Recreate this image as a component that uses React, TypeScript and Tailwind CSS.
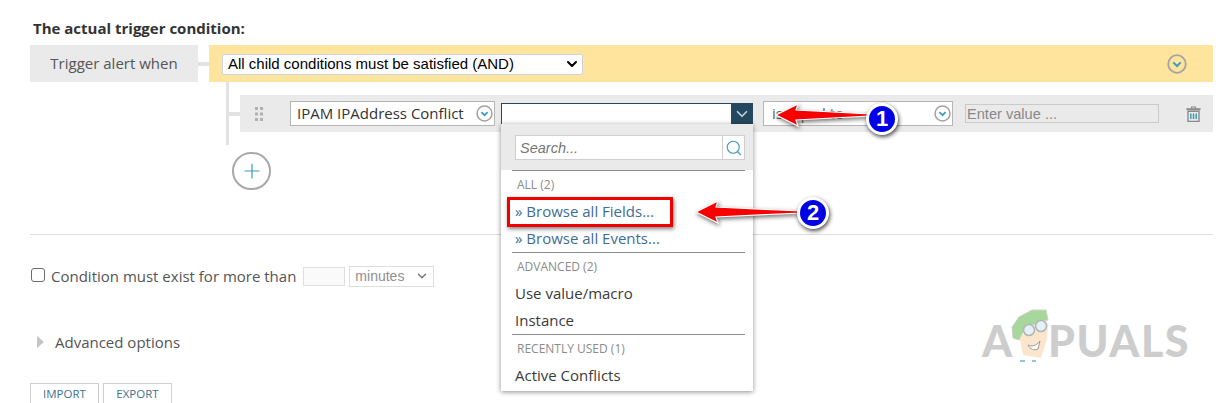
import { ChevronDown, Plus, Search } from 'lucide-react'

const openSans = "font-['Open_Sans',sans-serif]"
const arial = "font-['Liberation_Sans',Arial,sans-serif]"

function CircleChevron({ large }: { large?: boolean }) {
  const size = large ? 20 : 17
  return (
    <svg width={size} height={size} viewBox="0 0 20 20" className="shrink-0">
      <circle cx="10" cy="10" r="8.8" fill="none" stroke="#a3a3a3" strokeWidth="1.8" />
      <path d="M6.3 8.4 10 12l3.7-3.6" fill="none" stroke="#3a9dbd" strokeWidth="2" />
    </svg>
  )
}

function TrashIcon() {
  return (
    <svg width="15" height="16" viewBox="0 0 15 16" className="shrink-0">
      <path d="M5.5 2V1h4v1" fill="none" stroke="#8a8a8a" strokeWidth="1.2" />
      <rect x="0.5" y="2.2" width="14" height="2" fill="#8a8a8a" />
      <path d="M2 5.2h11V15.4H2z" fill="none" stroke="#8a8a8a" strokeWidth="1.4" />
      <path d="M4.8 7.5v5.5M7.5 7.5v5.5M10.2 7.5v5.5" stroke="#3a9dbd" strokeWidth="1.5" />
    </svg>
  )
}

function DragHandle() {
  return (
    <svg width="8" height="14" viewBox="0 0 8 14" className="shrink-0">
      {[0, 5.5, 11].map((y) => (
        <g key={y} fill="#b0b0b0">
          <rect x="0" y={y} width="3" height="3" />
          <rect x="5" y={y} width="3" height="3" />
        </g>
      ))}
    </svg>
  )
}

function Arrow({ width }: { width: number }) {
  return (
    <svg width={width} height="32" viewBox={`0 0 ${width} 32`} className="block overflow-visible">
      <path
        d={`M1 16 23 5l-2 6L${width} 15v2L21 21l2 6z`}
        fill="#f80000"
        stroke="#ffffff"
        strokeWidth="1.2"
        style={{ filter: 'drop-shadow(1px 2px 2px rgba(0,0,0,.55))' }}
      />
    </svg>
  )
}

function Badge({ n }: { n: string }) {
  return (
    <div
      className={`flex h-[32px] w-[32px] items-center justify-center rounded-full border-[3px] border-white bg-[#0000e6] text-[22px] font-bold leading-none text-white shadow-[1px_2px_4px_rgba(0,0,0,.7)] ${arial}`}
    >
      {n}
    </div>
  )
}

function MenuHeading({ children }: { children: string }) {
  return <div className="flex h-[27px] items-center pl-[16px] text-[12px] text-[#8b8b8b]">{children}</div>
}

function MenuItem({ children, link }: { children: string; link?: boolean }) {
  return (
    <div className={`flex h-[27px] items-center pl-[14px] text-[15px] ${link ? 'text-[#3e6d94]' : 'text-[#3a3a3a]'}`}>
      {children}
    </div>
  )
}

function FieldMenu() {
  return (
    <div className={`absolute left-[501px] top-[124px] h-[267px] w-[252px] bg-white shadow-[0_1px_5px_rgba(0,0,0,.45)] ${openSans}`}>
      <div className="h-[46px] bg-[#eaeaea] pl-[14px] pt-[11px]">
        <div className="flex h-[25px] w-[230px] border border-[#cfcfcf] bg-white">
          <div className={`flex-1 pl-[4px] text-[14.5px] italic leading-[25px] text-[#777] ${arial}`}>Search...</div>
          <div className="flex w-[22px] items-center justify-center border-l border-[#cfcfcf]">
            <Search size={18} strokeWidth={1.5} className="text-[#4a9dbb]" />
          </div>
        </div>
      </div>
      <div className="ml-[11px] mr-[8px] border-t border-[#8c8c8c]" />
      <MenuHeading>ALL (2)</MenuHeading>
      <MenuItem link>» Browse all Fields...</MenuItem>
      <MenuItem link>» Browse all Events...</MenuItem>
      <div className="ml-[11px] mr-[8px] border-t border-[#8c8c8c]" />
      <MenuHeading>ADVANCED (2)</MenuHeading>
      <MenuItem>Use value/macro</MenuItem>
      <MenuItem>Instance</MenuItem>
      <div className="ml-[11px] mr-[8px] border-t border-[#8c8c8c]" />
      <MenuHeading>RECENTLY USED (1)</MenuHeading>
      <MenuItem>Active Conflicts</MenuItem>
    </div>
  )
}

function Watermark() {
  return (
    <div className="absolute left-[982px] top-[306px] flex h-[56px] items-start">
      <span className="mt-[10px] w-[26px] text-[43px] font-black leading-[50px] text-[#cdcdcd] font-['Lato',sans-serif]">A</span>
      <svg width="42" height="56" viewBox="0 0 42 56" className="shrink-0">
        <path d="M11 30 15 49l18 3 6-19 1-15z" fill="#fbe6cd" />
        <path d="M4 21 11 11 24 4h14l2 10-8 2-10 4-8 8-3 6-6-2z" fill="#a8d79c" stroke="#cfcfcf" />
        <circle cx="21" cy="24" r="5.5" fill="#e3f1f8" stroke="#b5b5b5" strokeWidth="1.6" />
        <circle cx="33" cy="20" r="5.5" fill="#e3f1f8" stroke="#b5b5b5" strokeWidth="1.6" />
        <path d="M20 39c4 2 8 1 12-4l-2 8c-4 2-8 0-10-4z" fill="#ffffff" stroke="#9a9a9a" />
        <path d="M12 55h5M24 55h4" stroke="#8fc4da" strokeWidth="2" />
      </svg>
      <span className="mt-[10px] -ml-[2px] text-[43px] font-black leading-[50px] tracking-[1.5px] text-[#cdcdcd] font-['Lato',sans-serif]">
        PUALS
      </span>
    </div>
  )
}

export default function App() {
  return (
    <div className={`relative h-[403px] w-[1230px] overflow-hidden bg-white pl-[30px] pr-[17px] text-[#444] ${openSans}`}>
      <h2 className="h-[45px] pl-[3px] pt-[18px] text-[15px] font-bold leading-[20px] text-[#333]">
        The actual trigger condition:
      </h2>

      {/* Root condition */}
      <div className="flex h-[37px] items-center">
        <div className="flex h-full w-[168px] items-center justify-center text-[15px] text-[#555] bg-[#eaeaea]">
          Trigger alert when
        </div>
        <div className="h-[4px] w-[11px] bg-[#e2e2e2]" />
        <div className="flex h-full flex-1 items-center justify-between bg-[#ffe49e] pl-[13px] pr-[26px]">
          <div className={`mt-[1px] flex h-[21px] w-[361px] items-center justify-between rounded-[2px] border border-[#cfd3dc] bg-white pl-[5px] pr-[2px] text-[15px] text-black ${arial}`}>
            All child conditions must be satisfied (AND)
            <ChevronDown size={16} strokeWidth={3} className="text-black" />
          </div>
          <CircleChevron large />
        </div>
      </div>

      {/* Child conditions with tree line */}
      <div className="ml-[196px] h-[63px] w-[3px] bg-[#e2e2e2]" />
      <div className="-mt-[50px] ml-[199px] flex h-[37px] items-center">
        <div className="h-[4px] w-[11px] bg-[#e2e2e2]" />
        <div className="flex h-full flex-1 items-center bg-[#eaeaea] pl-[15px]">
          <DragHandle />
          <div className="ml-[27px] flex h-[25px] w-[205px] items-center justify-between border border-[#b5b5b5] bg-white pl-[6px] pr-[1px] text-[15px] text-[#333]">
            IPAM IPAddress Conflict
            <CircleChevron />
          </div>
          <div className="ml-[6px] flex h-[21px] w-[252px] border border-[#24485f] border-b-0 border-r-0 bg-white">
            <div className="flex-1" />
            <div className="flex w-[22px] items-center justify-center bg-[#24495f]">
              <ChevronDown size={18} strokeWidth={2.2} className="text-[#c5d3dc]" />
            </div>
          </div>
          <div className="ml-[10px] flex h-[25px] w-[190px] items-center justify-between border border-[#b5b5b5] bg-white pl-[8px] pr-[1px] text-[15px] text-[#666]">
            is equal to
            <CircleChevron />
          </div>
          <div className={`ml-[12px] flex h-[19px] w-[194px] items-center border border-[#cacaca] pl-[1px] pt-[2px] text-[14.6px] text-[#888] ${arial}`}>
            Enter value ...
          </div>
          <div className="ml-[27px]">
            <TrashIcon />
          </div>
        </div>
      </div>

      <div className="ml-[202px] mt-[20px] flex h-[38px] w-[39px] items-center justify-center rounded-full border-2 border-[#a8a8a8] bg-white">
        <Plus size={24} strokeWidth={1.2} className="text-[#3a9dbd]" />
      </div>

      <div className="mt-[44px] border-t border-[#dcdcdc]" />

      <div className="mt-[30px] flex h-[22px] items-center text-[15px] text-[#555]">
        <div className="ml-[1px] -mt-[2px] h-[14px] w-[14px] rounded-[3px] border border-[#6b6b6b] bg-white" />
        <span className="ml-[6px]">Condition must exist for more than</span>
        <div className="ml-[7px] h-[19px] w-[42px] border border-[#dedede] bg-[#fafafa]" />
        <div className={`ml-[4px] flex h-[21px] w-[85px] items-center justify-between border border-[#dedede] pl-[5px] pr-[4px] text-[14px] text-[#8f8f8f] ${arial}`}>
          minutes
          <ChevronDown size={14} strokeWidth={2.5} className="text-[#777]" />
        </div>
      </div>

      <div className="mt-[44px] flex h-[22px] items-center text-[15px] text-[#555]">
        <div className="ml-[7px] h-0 w-0 border-y-[6px] border-l-[7px] border-y-transparent border-l-[#c4c4c4]" />
        <span className="ml-[11px]">Advanced options</span>
      </div>

      <div className="mt-[30px] flex gap-[4px]">
        <div className="flex h-[24px] w-[69px] justify-center border border-[#cfcfcf] pt-[1px] text-[11.5px] text-[#3f7290]">IMPORT</div>
        <div className="flex h-[24px] w-[69px] justify-center border border-[#cfcfcf] pt-[1px] text-[11.5px] text-[#3f7290]">EXPORT</div>
      </div>

      <FieldMenu />

      {/* Screenshot annotations */}
      <div className="absolute left-[775px] top-[99px]">
        <Arrow width={95} />
      </div>
      <div className="absolute left-[866px] top-[103px]">
        <Badge n="1" />
      </div>
      <div className="absolute left-[507px] top-[197px] h-[30px] w-[166px] border-[3px] border-[#f00000] shadow-[1px_2px_4px_rgba(0,0,0,.5)]" />
      <div className="absolute left-[695px] top-[196px]">
        <Arrow width={106} />
      </div>
      <div className="absolute left-[797px] top-[197px]">
        <Badge n="2" />
      </div>

      <Watermark />
    </div>
  )
}
